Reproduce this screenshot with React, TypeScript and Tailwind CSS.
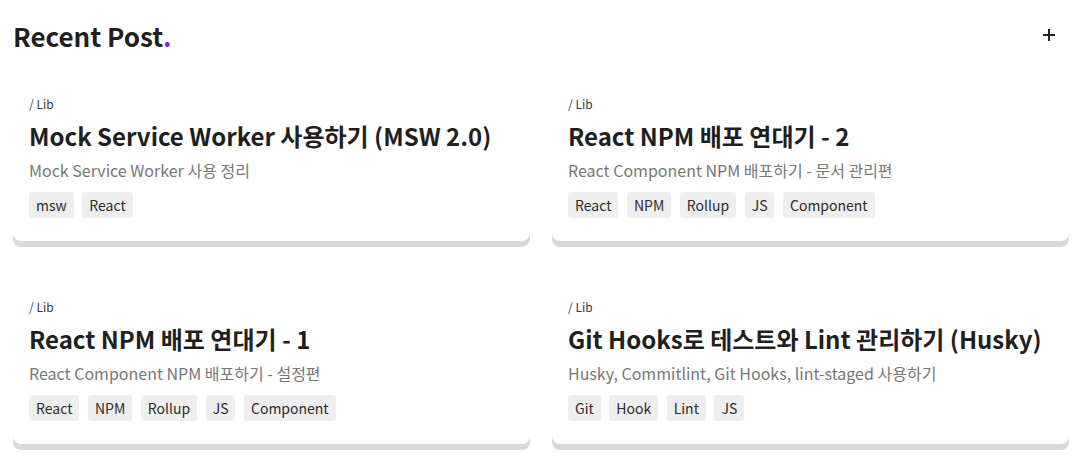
const posts = [
  {
    category: 'Lib',
    title: 'Mock Service Worker 사용하기 (MSW 2.0)',
    description: 'Mock Service Worker 사용 정리',
    tags: ['msw', 'React'],
  },
  {
    category: 'Lib',
    title: 'React NPM 배포 연대기 - 2',
    description: 'React Component NPM 배포하기 - 문서 관리편',
    tags: ['React', 'NPM', 'Rollup', 'JS', 'Component'],
  },
  {
    category: 'Lib',
    title: 'React NPM 배포 연대기 - 1',
    description: 'React Component NPM 배포하기 - 설정편',
    tags: ['React', 'NPM', 'Rollup', 'JS', 'Component'],
  },
  {
    category: 'Lib',
    title: 'Git Hooks로 테스트와 Lint 관리하기 (Husky)',
    description: 'Husky, Commitlint, Git Hooks, lint-staged 사용하기',
    tags: ['Git', 'Hook', 'Lint', 'JS'],
  },
];

type Post = (typeof posts)[number];

function PostCard({ post }: { post: Post }) {
  return (
    <article className="rounded-lg bg-white px-4 pt-4 pb-[23px] shadow-[0_6px_0_0_#d9d9d9]">
      <p className="text-[12px] leading-[18px] text-[#2f3a45]">/ {post.category}</p>
      <h3 className="mt-[7px] text-[24px] font-bold leading-[32px] text-[#1f1f1f]">
        {post.title}
      </h3>
      <p className="mt-[6px] text-[16px] leading-[24px] text-[#777777]">
        {post.description}
      </p>
      <ul className="mt-[10px] flex flex-wrap gap-[8.5px]">
        {post.tags.map((tag) => (
          <li
            key={tag}
            className="rounded-[3px] bg-[#eeeeee] px-[7px] py-[3px] text-[14px] leading-[20px] text-[#2b2b2b]"
          >
            {tag}
          </li>
        ))}
      </ul>
    </article>
  );
}

export default function App() {
  return (
    <div
      className="min-h-screen bg-white pl-[13px] pr-[15px]"
      style={{ fontFamily: '"Noto Sans CJK KR", "Noto Sans", sans-serif' }}
    >
      <header className="flex h-[70px] items-center justify-between">
        <h2 className="text-[26px] font-bold text-[#1f1f1f]">
          Recent Post<span className="text-[#7c1cff]">.</span>
        </h2>
        <button className="mr-[14px] text-[#222]" aria-label="more">
          <svg width="12" height="12" viewBox="0 0 12 12">
            <path d="M6 0v12M0 6h12" stroke="currentColor" strokeWidth="2" />
          </svg>
        </button>
      </header>
      <section className="mt-[9px] grid grid-cols-2 gap-x-[22px] gap-y-[41px]">
        {posts.map((post) => (
          <PostCard key={post.title} post={post} />
        ))}
      </section>
    </div>
  );
}
